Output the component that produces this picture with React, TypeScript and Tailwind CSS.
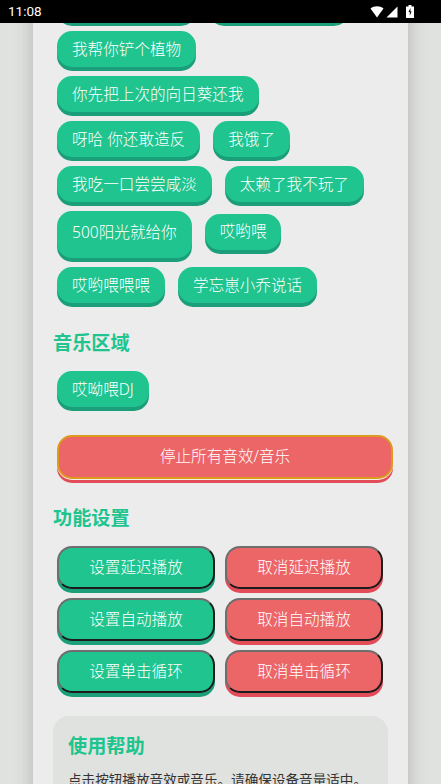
const FONT = "font-['Noto_Sans','Noto_Sans_CJK_SC',sans-serif]";

const soundButtons = [
  '我帮你铲个植物',
  '你先把上次的向日葵还我',
  '呀哈 你还敢造反',
  '我饿了',
  '我吃一口尝尝咸淡',
  '太赖了我不玩了',
  '500阳光就给你',
  '哎哟喂',
  '哎哟喂喂喂',
  '学忘崽小乔说话',
];

const settingRows = [
  ['设置延迟播放', '取消延迟播放'],
  ['设置自动播放', '取消自动播放'],
  ['设置单击循环', '取消单击循环'],
];

function StatusBar() {
  return (
    <div className="relative z-10 flex h-[23px] shrink-0 items-center justify-between bg-black pl-2 pr-[27px] text-white">
      <span className="font-['Roboto',sans-serif] text-[13.5px] leading-none">11:08</span>
      <div className="flex items-center gap-[2px]">
        <svg width="14" height="12" viewBox="0 0 14 12">
          <path d="M0.5 2.5C4 -0.5 10 -0.5 13.5 2.5L7 11.5Z" fill="#fff" />
        </svg>
        <svg width="12" height="12" viewBox="0 0 12 12">
          <path d="M0.5 11.5L11.5 0.5V11.5Z" fill="#fff" />
        </svg>
        <svg className="ml-[6px]" width="8" height="13" viewBox="0 0 8 13">
          <path d="M2.5 0H5.5V1.5H8V13H0V1.5H2.5Z" fill="#fff" />
          <path d="M4.5 3L2.5 7H3.8V10.5L5.6 6.4H4.4Z" fill="#000" />
        </svg>
      </div>
    </div>
  );
}

function SoundButton({ label }: { label: string }) {
  // the 500 chip is taller with its text high, its neighbour rides up a little
  const size = label.startsWith('500') ? 'h-[47px] pb-[4px]' : label === '哎哟喂' ? 'mb-[6px] h-[36px] pt-px' : 'h-[36px] pt-px';
  return (
    <button
      className={`${size} rounded-[15px] bg-[#20c48e] px-[15px] text-[15.6px] leading-none font-light whitespace-pre text-white shadow-[0_4px_0_#1b9f7b]`}
    >
      {label}
    </button>
  );
}

function SettingButton({ label, red }: { label: string; red: boolean }) {
  return (
    <button
      className={`h-[43px] w-[158px] rounded-[15px] border-2 border-t-[#6e6e6e] border-r-[#1c1c1c] border-b-[#1c1c1c] border-l-[#6e6e6e] text-[15.6px] leading-none font-light text-white ${
        red ? 'bg-[#ec6567] shadow-[0_4px_0_#e24c58]' : 'bg-[#20c48e] shadow-[0_4px_0_#1b9f7b]'
      }`}
    >
      {label}
    </button>
  );
}

export default function App() {
  return (
    <div className={`flex h-screen flex-col overflow-hidden bg-[#e0e2df] ${FONT}`}>
      <StatusBar />
      <div className="min-h-0 flex-1 overflow-hidden">
        {/* page is scrolled down, first row sits under the status bar */}
        <div className="mx-auto -mt-[37px] w-[375px] bg-[#ececec] px-5 pb-10 shadow-[0_0_18px_rgba(0,0,0,0.2)]">
          <div className="ml-1 flex flex-wrap items-center gap-x-[13px] gap-y-[9px]">
            <div className="h-[36px] w-[139px] rounded-[15px] bg-[#20c48e] shadow-[0_4px_0_#1b9f7b]" />
            <div className="h-[36px] w-[140px] rounded-[15px] bg-[#20c48e] shadow-[0_4px_0_#1b9f7b]" />
            {soundButtons.map(label => (
              <SoundButton key={label} label={label} />
            ))}
          </div>

          <h2 className="mt-[26px] text-[19.2px] leading-[27px] font-bold text-[#20c48e]">音乐区域</h2>
          <div className="mt-[15px] ml-1">
            <SoundButton label="哎呦喂DJ" />
          </div>

          <button className="mt-[28px] ml-1 h-[44px] w-[336px] rounded-[15px] border-2 border-[#dd9a1c] bg-[#ec6567] text-[15.6px] leading-none font-light text-white shadow-[0_1px_0_#f6efe9,0_4px_0_#e24c58]">
            停止所有音效/音乐
          </button>

          <h2 className="mt-[25px] text-[19.2px] leading-[27px] font-bold text-[#20c48e]">功能设置</h2>
          <div className="mt-[15px] ml-1 flex flex-col gap-[9px]">
            {settingRows.map(([setLabel, cancelLabel]) => (
              <div key={setLabel} className="flex gap-[10px]">
                <SettingButton label={setLabel} red={false} />
                <SettingButton label={cancelLabel} red />
              </div>
            ))}
          </div>

          <div className="mt-[23px] rounded-[16px] bg-[#e0e2df] px-[15px] pt-[16px] pb-4">
            <h3 className="text-[19.2px] leading-[27px] font-bold text-[#20c48e]">使用帮助</h3>
            <p className="mt-[10px] text-[13.6px] leading-[22px] text-[#333]">
              点击按钮播放音效或音乐。请确保设备音量适中。
            </p>
          </div>
        </div>
      </div>
    </div>
  );
}
